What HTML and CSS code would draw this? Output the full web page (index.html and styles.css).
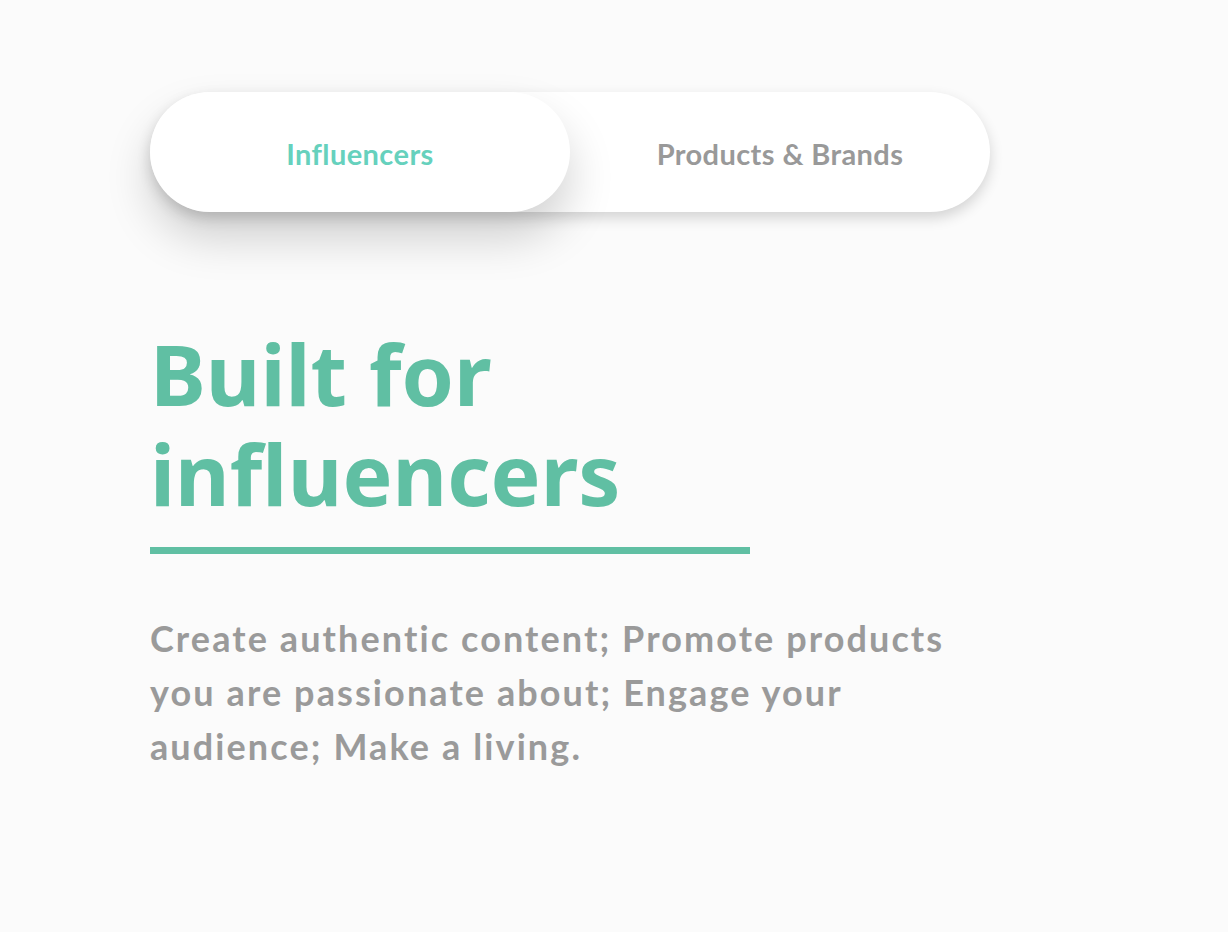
FILE: index.html
```html
<!DOCTYPE html>
<html>
<head>
<meta charset="utf-8">
<link rel="stylesheet" href="styles.css">
</head>
<body>
<main class="page">
  <div class="toggle">
    <div class="tab tab-active">Influencers</div>
    <div class="tab">Products &amp; Brands</div>
  </div>
  <h1 class="title">Built for<br>influencers</h1>
  <div class="rule"></div>
  <p class="lead">Create authentic content; Promote products you are passionate about; Engage your audience; Make a living.</p>
</main>
</body>
</html>
```
FILE: styles.css
```css
html, body {
  margin: 0;
  padding: 0;
  background: #fbfbfb;
}
.page {
  padding: 92px 0 0 150px;
  width: 840px;
}
.toggle {
  display: flex;
  width: 840px;
  height: 120px;
  background: #ffffff;
  border-radius: 60px;
  box-shadow: 0 6px 14px rgba(0, 0, 0, 0.16);
}
.tab {
  flex: 1;
  display: flex;
  align-items: center;
  justify-content: center;
  font-family: "Lato", "Noto Sans", sans-serif;
  font-weight: 700;
  font-size: 29px;
  letter-spacing: 0.4px;
  color: #999999;
  border-radius: 60px;
  padding-top: 2px;
}
.tab-active {
  background: #ffffff;
  color: #66d1bd;
  box-shadow: 0 25px 45px rgba(0, 0, 0, 0.18);
  position: relative;
  z-index: 1;
}
.title {
  margin: 112px 0 0 0;
  font-family: "Noto Sans", sans-serif;
  font-weight: 700;
  font-size: 84px;
  line-height: 100px;
  color: #60bfa3;
}
.rule {
  width: 600px;
  height: 7px;
  background: #60bfa3;
  margin-top: 23px;
}
.lead {
  margin: 57px 0 0 0;
  width: 815px;
  font-family: "Lato", sans-serif;
  font-weight: 700;
  font-size: 36px;
  letter-spacing: 2.1px;
  line-height: 54px;
  color: #9a9a9a;
}
```
